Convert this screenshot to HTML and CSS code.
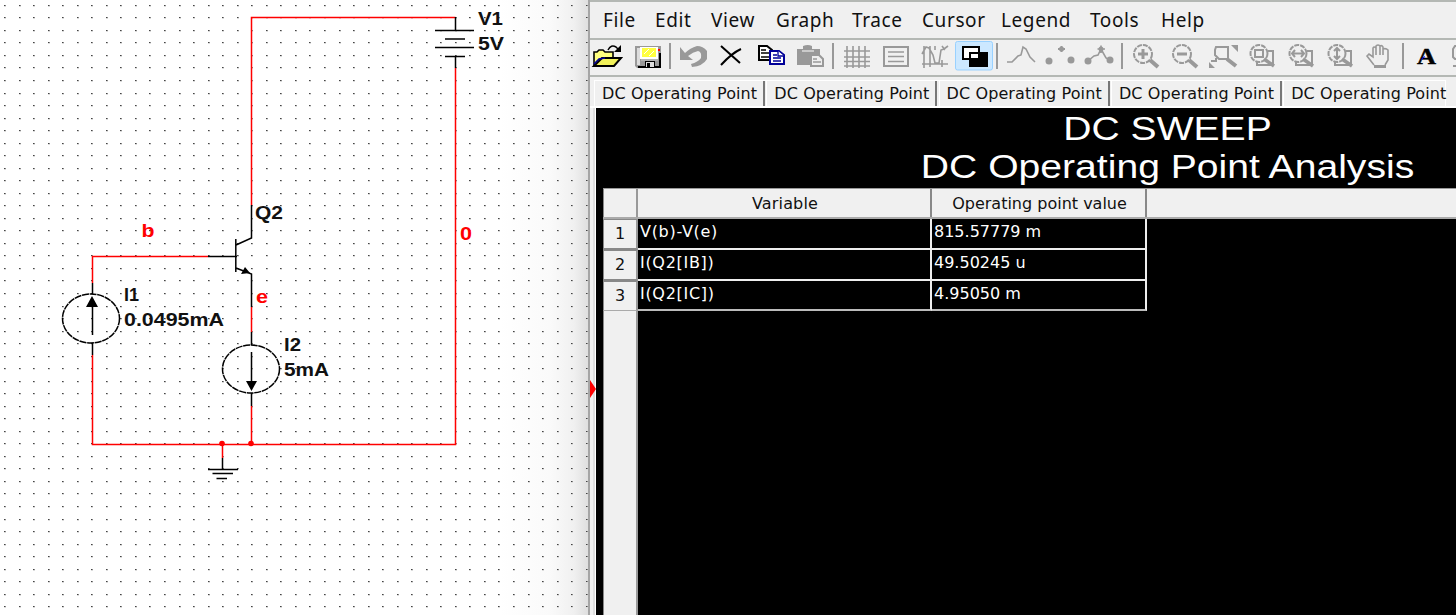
FILE: index.html
```html
<!DOCTYPE html>
<html lang="en">
<head>
<meta charset="utf-8">
<title>DC Operating Point Analysis</title>
<link rel="stylesheet" href="styles.css">
</head>
<body>
<main class="app">
  <section class="schematic">
    <svg class="circuit" width="588" height="615" viewBox="0 0 588 615">
      <g id="grid" shape-rendering="crispEdges"></g>
      <g class="wire">
        <path d="M251.5 205V17.5H455.5"/>
        <path d="M455.5 68V444.5H92.5V355"/>
        <path d="M92.5 283V256.5H208"/>
        <path d="M251.5 307V332M251.5 406V444M222.500 444V458"/>
      </g>
      <circle cx="222" cy="443.500" r="2.800" fill="#f00"/>
      <circle cx="251" cy="443.500" r="2.800" fill="#f00"/>
      <g class="part">
        <path d="M455.500 17V30M435 30.500H474M445 39H465M435 47.500H474M445 56.500H465M455.500 56V68"/>
        <path d="M251.500 205V238L236 245M235.800 239V272M208 256.500H237M236 268L251.500 274V307"/>
        <path d="M92.500 283V294M92.500 343V355M92.500 300V335"/>
        <path d="M251.500 332V345M251.500 393V406M251.500 352V385"/>
        <path d="M222.500 458V469M208 469.500H238M212.500 473.500H233M216.500 478.500H227"/>
        <ellipse cx="91" cy="318.500" rx="28.500" ry="24.500" stroke-dasharray="7 .7"/>
        <ellipse cx="251" cy="369" rx="28.500" ry="24" stroke-dasharray="7 .7"/>
      </g>
      <path d="M92 296L98 307H86ZM251.500 391L257 381H246ZM250 273L241 274L245 267Z"/>
      <g class="label">
        <text x="478" y="25" textLength="25" lengthAdjust="spacingAndGlyphs">V1</text>
        <text x="478" y="50" textLength="26" lengthAdjust="spacingAndGlyphs">5V</text>
        <text x="255" y="219" textLength="28" lengthAdjust="spacingAndGlyphs">Q2</text>
        <text x="124" y="301" textLength="15" lengthAdjust="spacingAndGlyphs">I1</text>
        <text x="124" y="326" textLength="100" lengthAdjust="spacingAndGlyphs">0.0495mA</text>
        <text x="284" y="351" textLength="17" lengthAdjust="spacingAndGlyphs">I2</text>
        <text x="284" y="376" textLength="45" lengthAdjust="spacingAndGlyphs">5mA</text>
      </g>
      <g class="label net">
        <text x="141.500" y="237" textLength="13" lengthAdjust="spacingAndGlyphs">b</text>
        <text x="256" y="303" textLength="12" lengthAdjust="spacingAndGlyphs">e</text>
        <text x="460" y="240" textLength="12" lengthAdjust="spacingAndGlyphs">0</text>
      </g>
    </svg>
  </section>
  <section class="grapher">
    <nav class="menu">
      <span>File</span><span>Edit</span><span>View</span><span>Graph</span><span>Trace</span><span>Cursor</span><span>Legend</span><span>Tools</span><span>Help</span>
    </nav>
    <div class="toolbar">
      <svg class="first" viewBox="0 0 38 36"><path d="M4 26V12H7L9 10H13L15 12H23V17" fill="#ffff80" stroke="#000" stroke-width="1.600"/><path d="M4 26L12 18H31L24 26Z" fill="#f2f25a" stroke="#000" stroke-width="2"/><path d="M4 24L9 19L15 18" fill="none" stroke="#009" stroke-width="1.500"/><path d="M18 10Q21 4 26 7L29 10" fill="none" stroke="#000" stroke-width="1.500"/><path d="M31 5V12H24Z"/></svg>
      <svg viewBox="0 0 39 36"><path d="M7 6H33V28H9L7 26Z" fill="#999"/><path d="M9 8H12V25H9Z" fill="#ddd"/><path d="M12 7H30V19H12Z" fill="#fff"/><path d="M14 8H28V17H14Z" fill="#ffff40"/><path d="M16 14L21 9M21 16L26 11" stroke="#fff"/><path d="M30 9H32V11H30Z" fill="red"/><path d="M31 13H33V28H10V26H17V21H27V26H31Z"/><path d="M13 20H30" stroke="#ccc"/><path d="M18 22H26V27H18Z" fill="#ddd"/><path d="M19 23H22V27H19Z"/></svg>
      <i class="sep"></i>
      <svg viewBox="0 0 39 36"><path d="M6 7V20H19L14 16Q19 12 24 11Q28 12 27 18Q24 22 17 24L18 27Q29 26 33 19V11Q29 6 23 6Q16 8 11 13Z" fill="#999"/></svg>
      <svg viewBox="0 0 39 36"><path d="M8 6L27 23M28 9Q19 13 8 25" fill="none" stroke="#000" stroke-width="2"/></svg>
      <svg viewBox="0 0 39 36"><g fill="#fff" stroke="#000" stroke-width="2"><path d="M7 6H15L20 10V20H7Z"/><path d="M9 10H14M9 13H18M9 17H18" stroke-width="1.500"/></g><g fill="#fff" stroke="#000098" stroke-width="2"><path d="M18 11H27L32 15V24H18Z"/><path d="M26 11V16H32M21 15H25M21 18H29M21 21H29" stroke-width="1.300"/></g></svg>
      <svg viewBox="0 0 39 36"><path d="M6 9H12V6Q17 4 21 6V9H29V15H19V25H6Z" fill="#999"/><path d="M11 11H23" stroke="#ddd" stroke-width="1.500"/><path d="M20 15H28L32 19V26H20Z" fill="#eee" stroke="#999" stroke-width="2"/><path d="M22 19H26M22 22H30" stroke="#999" stroke-width="1.500"/></svg>
      <i class="sep"></i>
      <svg class="gray" viewBox="0 0 39 36"><path d="M7 11H33M7 17H33M7 21.500H33M7 26H33M10 6V28M16 6V28M22 6V28M28 6V28" stroke-width="1.600"/></svg>
      <svg class="gray" viewBox="0 0 39 36"><path d="M8 7H32V26H8Z"/><path d="M12 12H28M12 16.500H28M12 21.500H28" stroke-width="1.500"/></svg>
      <svg class="gray thin" viewBox="0 0 39 36"><path d="M9 6V28M7 24H33M15 6V27M27 20V27M7 14L11 7L14 8L18 15L20 23H24L26 10L29 9L33 6M20 6V10M27 6L30 10"/></svg>
      <svg class="active" viewBox="0 0 39 36"><rect x="1.500" y="1.500" width="37" height="28.500" rx="2" fill="#cce8ff" stroke="#99d1ff"/><path d="M9 7H25V19H9Z" fill="#fff" stroke="#000" stroke-width="2"/><path d="M15 12H34V27H15Z"/><path d="M17 14H24V18H17Z" fill="#fff"/></svg>
      <i class="sep wide"></i>
      <svg class="gray thin" viewBox="0 0 39 36"><path d="M6 22H11L17 16L20 15L22 7L25 9L29 17L34 22"/></svg>
      <svg class="gray" viewBox="0 0 39 36"><path d="M18 9H25M21.500 6V12"/><g class="dots"><circle cx="9" cy="21" r="3.500"/><circle cx="31" cy="20" r="3.500"/><circle cx="21.500" cy="9" r="2.500"/></g></svg>
      <svg class="gray thin" viewBox="0 0 39 36"><path d="M9 21L15 16L19 15L22 9L27 18L31 20M18.500 9H26M22 5.500V13"/><g class="dots"><circle cx="9" cy="21" r="3.500"/><circle cx="31" cy="20" r="3.500"/><circle cx="22" cy="9" r="2.500"/></g></svg>
      <i class="sep wide"></i>
      <svg class="gray" viewBox="0 0 39 36"><circle cx="17" cy="14" r="9" class="dash"/><path d="M12 14H22M17 9V19" stroke-width="3"/><path d="M24 20L32 27" stroke-width="4"/></svg>
      <svg class="gray" viewBox="0 0 39 36"><circle cx="17" cy="14" r="9" class="dash"/><path d="M12 14H22" stroke-width="3"/><path d="M24 20L32 27" stroke-width="4"/></svg>
      <svg class="gray" viewBox="0 0 39 36"><path d="M7 21H12V18M12 7H24V19H15L11 15V10Z"/><path d="M23 19L32 26" stroke-width="4"/><path d="M27 5H34V12ZM5 22V28H11Z" fill="#999" stroke="none"/></svg>
      <svg class="gray" viewBox="0 0 39 36"><circle cx="16" cy="13.500" r="8.500" class="dash"/><path d="M12 10H20V17H12ZM25 11H30V25H14V22"/><path d="M21 19L31 26" stroke-width="3.500"/></svg>
      <svg class="gray" viewBox="0 0 39 36"><circle cx="16" cy="13.500" r="8.500" class="dash"/><path d="M10 13.500H22M13 10L10 13.500L13 17M19 10L22 13.500L19 17M25 11H30V25H14V22"/><path d="M21 19L31 26" stroke-width="3.500"/></svg>
      <svg class="gray" viewBox="0 0 39 36"><circle cx="16" cy="13.500" r="8.500" class="dash"/><path d="M16 8V19M13 11L16 8L19 11M13 16L16 19L19 16M25 11H30V25H14V22"/><path d="M21 19L31 26" stroke-width="3.500"/></svg>
      <svg class="gray thin" viewBox="0 0 39 36"><path d="M14 25L7 16L9 14L13 17V8Q14 6 16 8V15V6Q18 4 20 6V15V6Q22 5 23 7V15V9Q26 8 28 10V20L25 25"/><path d="M14 26.500H26" stroke-width="3"/></svg>
      <i class="sep wide"></i>
      <svg viewBox="0 0 39 36"><text class="serif-a" x="10" y="24" textLength="19" lengthAdjust="spacingAndGlyphs">A</text><path d="M14 19.500L18 16.500" stroke="#00f"/></svg>
      <svg class="gray" viewBox="0 0 39 36"><path d="M14 6H9L7 9V17L9 19H14M7 26H14"/></svg>
    </div>
    <div class="tabs">
      <span>DC Operating Point</span><span>DC Operating Point</span><span>DC Operating Point</span><span>DC Operating Point</span><span>DC Operating Point</span>
    </div>
    <div class="view">
      <h1><span>DC SWEEP</span><span>DC Operating Point Analysis</span></h1>
      <div class="table">
        <div class="row head"><b></b><span>Variable</span><span>Operating point value</span></div>
        <div class="row"><b>1</b><span>V(b)-V(e)</span><span>815.57779 m</span></div>
        <div class="row"><b>2</b><span>I(Q2[IB])</span><span>49.50245 u</span></div>
        <div class="row last"><b>3</b><span>I(Q2[IC])</span><span>4.95050 m</span></div>
        <div class="gutter"></div>
      </div>
    </div>
    <i class="marker"></i>
  </section>
</main>
<script src="grid.js"></script>
</body>
</html>
```
FILE: styles.css
```css
* { box-sizing: border-box; }
body { margin: 0; width: 1456px; height: 615px; overflow: hidden; background: #fff; }
.app { display: flex; width: 1456px; height: 615px; overflow: hidden; }
.schematic { width: 588px; flex: none; background: linear-gradient(to right, #fff 500px, #fafafa 550px, #f0f0f0 574px, #dfdfdf 588px); }
.circuit { display: block; }
.wire { fill: none; stroke: #f00; stroke-width: 1.5; }
.part { fill: none; stroke: #000; stroke-width: 1.5; }
.label { font: bold 18px "Liberation Sans", Arial, sans-serif; fill: #111; }
.net { fill: #f00; }

.grapher { position: relative; width: 868px; flex: none; display: flex; flex-direction: column; background: #f0f0f0; border-left: 2px solid #a5a5a5; overflow: hidden; font-family: "DejaVu Sans", Verdana, sans-serif; color: #111; }
.menu { display: grid; grid-template-columns: 52px 56px 65px 76px 70px 79px 89px 71px 60px; align-items: center; height: 40px; flex: none; padding: 0 0 0 13px; border-top: 2px solid #b4b8b4; border-bottom: 2px solid #b4b8b4; font: 19px "Noto Sans", sans-serif; letter-spacing: .6px; }
.toolbar { display: flex; height: 37px; flex: none; border-bottom: 2px solid #b4b8b4; }
.toolbar svg { width: 39px; height: 36px; flex: none; }
.toolbar .first { width: 38px; }
.sep { width: 7px; height: 26px; margin-top: 3px; flex: none; background: linear-gradient(#999, #999) 2px 0 / 2px 100% no-repeat; }
.wide { width: 8px; background-position-x: 3px; }
.gray { fill: none; stroke: #999; stroke-width: 2; }
.thin { stroke-width: 1.6; }
.dots { fill: #999; stroke: none; }
.dash { stroke-dasharray: 5 1; }
.serif-a { font: bold 23px "Liberation Serif", serif; stroke: #000; stroke-width: .5px; }

.tabs { display: flex; height: 31px; flex: none; padding: 3px 0 2px 4px; border-bottom: 2px solid #fff; }
.tabs span { width: 172.3px; flex: none; height: 26px; line-height: 26px; padding-left: 7px; font-size: 16px; letter-spacing: .1px; white-space: nowrap; border-top: 1px solid #fff; border-left: 1px solid #fff; background: linear-gradient(#777, #777) 168px 0 / 2px 100% no-repeat; }
.tabs span:last-child { background: none; border-right: 1px solid #fff; width: 163px; }
.view { flex: 1; margin-left: 6px; padding-left: 7px; background: #000; box-shadow: -1px 0 #fff, -3px 0 #ddd; }
h1 { margin: 0; height: 80px; width: 1129px; font: 33px/38px "Liberation Sans", Arial, sans-serif; color: #fff; text-align: center; display: flex; flex-direction: column; padding-top: 2px; }
h1 span { transform: scaleX(1.185); white-space: nowrap; }
.table { display: flex; flex-direction: column; height: 428px; font-size: 16px; }
.row { display: flex; height: 31px; flex: none; color: #fff; line-height: 25px; }
.row b { width: 35px; flex: none; font-weight: normal; color: #111; background: #f0f0f0; border: 1px solid #888; border-right: 2px solid #999; border-bottom: 2px solid #888; text-align: center; line-height: 28px; }
.row span { width: 294px; flex: none; padding-left: 2px; border-right: 2px solid #eee; border-bottom: 2px solid #eee; white-space: nowrap; letter-spacing: .7px; }
.row span:last-child { width: 215px; letter-spacing: 0; }
.last { height: 30px; }
.last b { border-bottom: 1px solid #aaa; }
.last span { border-bottom-color: #bbb; }
.head { background: #f0f0f0; color: #111; height: 31px; border-top: 1px solid #999; border-bottom: 2px solid #aaa; }
.head b { border-bottom: 0; border-top: 0; }
.head span { text-align: center; line-height: 30px; border-bottom: 0; border-right-color: #888; letter-spacing: .15px; }
.gutter { flex: 1; width: 35px; background: #f0f0f0; border: 1px solid #888; border-right: 2px solid #999; border-top: 0; }
.marker { position: absolute; left: -2px; top: 377px; width: 8px; height: 24px; background: #f00; clip-path: polygon(0 0, 100% 50%, 0 100%); }
```
FILE: grid.js
```js
const grid = document.getElementById('grid');
function dot(x, y, w, h, fill) {
  const r = document.createElementNS('http://www.w3.org/2000/svg', 'rect');
  r.setAttribute('x', x);
  r.setAttribute('y', y);
  r.setAttribute('width', w);
  r.setAttribute('height', h);
  r.setAttribute('fill', fill);
  grid.appendChild(r);
}
for (let j = 0; j < 49; j++) {
  for (let i = 0; i < 41; i++) {
    const x = Math.floor(4.6 + i * 14.54);
    const y = Math.floor(5.3 + j * 12.53);
    dot(x, y, 1, 1, '#444');
    dot(x + 1, y, 1, 1, '#888');
    dot(x, y + 1, 2, 1, '#ddd');
  }
}
```
